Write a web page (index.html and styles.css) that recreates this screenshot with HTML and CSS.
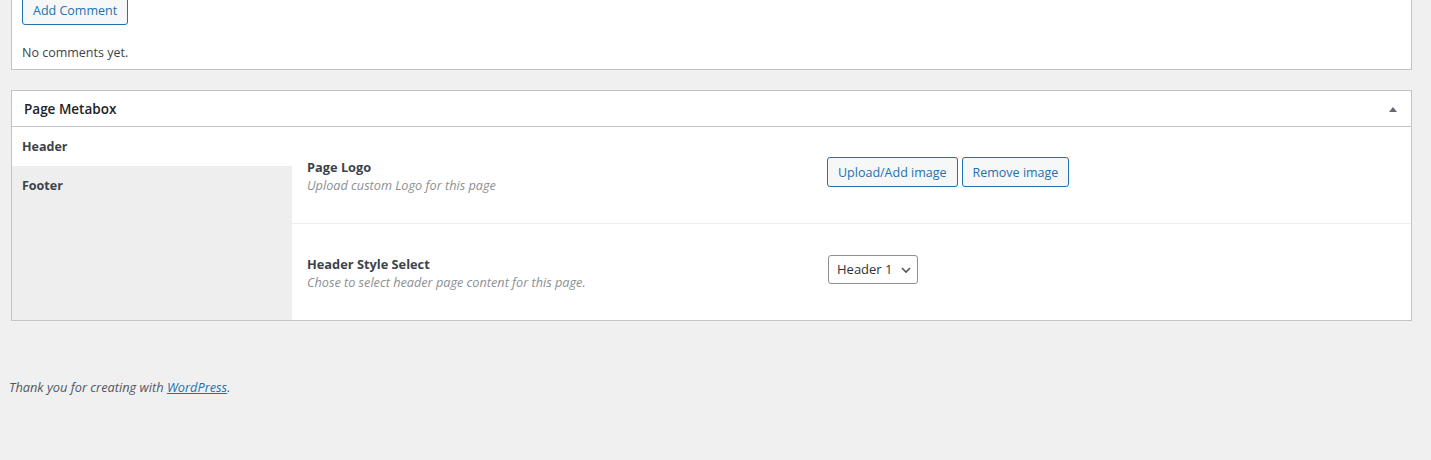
FILE: index.html
```html
<!DOCTYPE html>
<html lang="en">

<head>
    <meta charset="UTF-8">
    <meta name="viewport" content="width=device-width, initial-scale=1.0">
    <title>Edit Page</title>
    <link rel="stylesheet" href="styles.css">
</head>

<body>
    <div class="wrap">
        <!-- comments box -->
        <div class="postbox comments-box">
            <button type="button" class="button">Add Comment</button>
            <p class="no-comments">No comments yet.</p>
        </div>

        <!-- page metabox -->
        <div class="postbox metabox">
            <div class="postbox-header">
                <h2 class="postbox-title">Page Metabox</h2>
                <span class="toggle-arrow"></span>
            </div>
            <div class="metabox-body">
                <ul class="tabs">
                    <li class="tab active">Header</li>
                    <li class="tab">Footer</li>
                </ul>
                <div class="fields">
                    <div class="field-row">
                        <div class="field-label">
                            <strong>Page Logo</strong>
                            <span class="desc">Upload custom Logo for this page</span>
                        </div>
                        <div class="field-input">
                            <button type="button" class="button">Upload/Add image</button>
                            <button type="button" class="button">Remove image</button>
                        </div>
                    </div>
                    <div class="field-row">
                        <div class="field-label">
                            <strong>Header Style Select</strong>
                            <span class="desc">Chose to select header page content for this page.</span>
                        </div>
                        <div class="field-input">
                            <div class="select-wrap">
                                <select class="select">
                                    <option>Header 1</option>
                                    <option>Header 2</option>
                                </select>
                                <svg class="chevron" width="12" height="12" viewBox="0 0 12 12">
                                    <path d="M2 4 L6 8 L10 4" fill="none" stroke="#50575e" stroke-width="1.6" />
                                </svg>
                            </div>
                        </div>
                    </div>
                </div>
            </div>
        </div>
    </div>

    <p class="footer-text">Thank you for creating with <a href="#">WordPress</a>.</p>
</body>

</html>
```

FILE: styles.css
```css
/* base */
body {
    margin: 0;
    background-color: #f0f0f1;
    font-family: "Open Sans", "Noto Sans", sans-serif;
    font-size: 13px;
    color: #3c434a;
    overflow: hidden;
}

.wrap {
    padding: 0 19px 0 11px;
}

/* boxes */
.postbox {
    background-color: #fff;
    border: 1px solid #c3c4c7;
}

.comments-box {
    margin-top: -16px;
    padding: 10px 10px 0;
}

.no-comments {
    margin: 19px 0 0;
    padding-bottom: 8px;
    font-size: 12.5px;
    color: #3c434a;
}

/* buttons */
.button {
    height: 30px;
    padding: 0 10px;
    border: 1px solid #2271b1;
    border-radius: 3px;
    background-color: #f6f7f7;
    color: #2271b1;
    font-family: inherit;
    font-size: 12.5px;
    cursor: pointer;
}

/* metabox */
.metabox {
    margin-top: 20px;
}

.postbox-header {
    display: flex;
    align-items: center;
    justify-content: space-between;
    height: 35px;
    border-bottom: 1px solid #c3c4c7;
    padding: 0 14px 0 12px;
}

.postbox-title {
    margin: 0;
    font-size: 13.5px;
    font-weight: 600;
    color: #1d2327;
}

.toggle-arrow {
    width: 0;
    height: 0;
    border-left: 4px solid transparent;
    border-right: 4px solid transparent;
    border-bottom: 5px solid #646970;
    margin-top: 1px;
}

.metabox-body {
    display: flex;
}

/* tabs */
.tabs {
    width: 280px;
    margin: 0;
    padding: 0;
    list-style: none;
    background-color: #eeeeee;
}

.tab {
    height: 39px;
    line-height: 40px;
    padding: 0 10px;
    font-weight: 700;
    font-size: 12.5px;
    color: #3c434a;
}

.tab.active {
    background-color: #fff;
}

/* fields */
.fields {
    flex: 1;
}

.field-row {
    display: flex;
    align-items: center;
    height: 96px;
    padding: 0 15px;
}

.field-row + .field-row {
    border-top: 1px solid #eeeeee;
}

.field-label {
    width: 520px;
    display: flex;
    flex-direction: column;
    padding-top: 1px;
}

.field-label strong {
    font-weight: 700;
    font-size: 12.8px;
    color: #3c434a;
}

.desc {
    font-style: italic;
    font-size: 12.7px;
    color: #8c8f94;
}

.field-input {
    display: flex;
    gap: 4px;
    margin-top: -6px;
}

/* select */
.select-wrap {
    position: relative;
    margin-left: 1px;
}

.select {
    appearance: none;
    -webkit-appearance: none;
    height: 29px;
    padding: 0 24px 0 8px;
    border: 1px solid #8c8f94;
    border-radius: 3px;
    background-color: #fff;
    color: #2c3338;
    font-family: inherit;
    font-size: 13px;
}

.chevron {
    position: absolute;
    right: 6px;
    top: 9px;
    pointer-events: none;
}

/* footer */
.footer-text {
    margin: 57px 0 0 9px;
    font-style: italic;
    font-size: 12.8px;
    color: #50575e;
}

.footer-text a {
    color: #2271b1;
}
```
